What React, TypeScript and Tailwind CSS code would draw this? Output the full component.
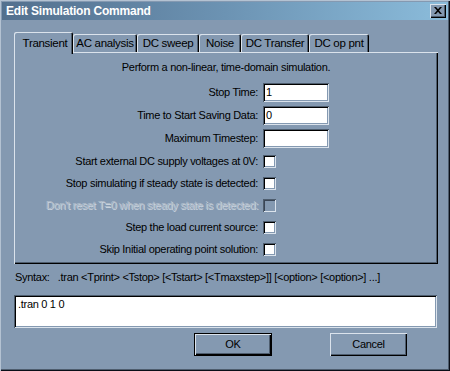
import React from "react";

const raised =
  "shadow-[inset_1px_1px_0_#dbe3ec,inset_-1px_-1px_0_#000,inset_-2px_-2px_0_#4e5d6e]";
const sunken =
  "shadow-[inset_1px_1px_0_#4e5d6e,inset_-1px_-1px_0_#dbe3ec,inset_2px_2px_0_#000,inset_-2px_-2px_0_#8499b1]";

function Tab({ label, w, active }: { label: string; w: string; active?: boolean }) {
  if (active) {
    return (
      <div
        className={`${w} h-[22px] -mb-[2px] relative z-10 bg-[#8499b1] flex items-start justify-center pt-[4px] pl-[3px] shadow-[inset_1px_1px_0_#dbe3ec,inset_-1px_0_0_#000,inset_-2px_0_0_#4e5d6e] rounded-tl-[2px] rounded-tr-[2px]`}
      >
        <span className="text-[11.5px] leading-[14px]">{label}</span>
      </div>
    );
  }
  return (
    <div
      className={`${w} h-[18px] bg-[#8499b1] flex items-start justify-center pt-[2px] shadow-[inset_1px_1px_0_#dbe3ec,inset_-1px_0_0_#000,inset_-2px_0_0_#4e5d6e] rounded-tl-[2px] rounded-tr-[2px]`}
    >
      <span className="text-[11.5px] leading-[14px]">{label}</span>
    </div>
  );
}

function InputRow({ label, value }: { label: string; value: string }) {
  return (
    <div className="grid grid-cols-[244px_auto] gap-x-[5px] h-[23px] items-center">
      <div className="text-right">{label}</div>
      <div className={`w-[66px] h-[19px] bg-white ${sunken} pl-[3px] pt-[3px] leading-[13px]`}>{value}</div>
    </div>
  );
}

function CheckRow({ label, disabled }: { label: string; disabled?: boolean }) {
  return (
    <div className="grid grid-cols-[244px_auto] gap-x-[5px] h-[22px] items-center">
      <div
        className={`text-right ${disabled ? "text-[#aebbc9] [text-shadow:1px_1px_0_#c9d3de]" : ""}`}
      >
        {label}
      </div>
      <div
        className={`w-[13px] h-[13px] ${
          disabled
            ? "bg-[#8499b1] shadow-[inset_1px_1px_0_#4e5d6e,inset_-1px_-1px_0_#dbe3ec,inset_2px_2px_0_#3a4656]"
            : `bg-white ${sunken}`
        }`}
      />
    </div>
  );
}

export default function App() {
  return (
    <div className="w-[450px] h-[371px] bg-[#8499b1] p-[2px] shadow-[inset_1px_1px_0_#b4c2d2,inset_-1px_-1px_0_#0a0f18,inset_-2px_-2px_0_#4e5d6e] flex flex-col font-['Liberation_Sans',Arial,sans-serif] text-[11px] tracking-[-0.3px] text-black overflow-hidden">
      {/* Title bar */}
      <div className="h-[18px] flex items-center justify-between pl-[4px] pr-[2px] bg-linear-to-r from-[#53708e] via-[#6c93b3] to-[#8bbcdb]">
        <span className="text-white font-bold text-[12px] tracking-[-0.2px] leading-[14px]">
          Edit Simulation Command
        </span>
        <div className={`w-[16px] h-[14px] bg-[#8499b1] ${raised} flex items-center justify-center`}>
          <svg width="8" height="7" viewBox="0 0 8 7" className="-mt-[1px] -ml-[1px]">
            <path d="M0 0h2l2 2.2L6 0h2L5 3.5 8 7H6L4 4.8 2 7H0l3-3.5z" fill="#000" />
          </svg>
        </div>
      </div>

      {/* Content */}
      <div className="flex flex-col pl-[12px] pt-[12px]">
        {/* Tabs */}
        <div className="flex items-end h-[20px]">
          <Tab label="Transient" w="w-[59px]" active />
          <Tab label="AC analysis" w="w-[64px]" />
          <Tab label="DC sweep" w="w-[62px]" />
          <Tab label="Noise" w="w-[42px]" />
          <Tab label="DC Transfer" w="w-[68px]" />
          <Tab label="DC op pnt" w="w-[60px]" />
        </div>

        {/* Panel */}
        <div className="w-[424px] shadow-[inset_1px_1px_0_#dbe3ec,inset_-1px_-1px_0_#000,inset_-2px_-2px_0_#4e5d6e] pt-[8px] pb-[4px]">
          <div className="text-center leading-[14px]">Perform a non-linear, time-domain simulation.</div>
          <div className="mt-[7px] flex flex-col">
            <InputRow label="Stop Time:" value="1" />
            <InputRow label="Time to Start Saving Data:" value="0" />
            <InputRow label="Maximum Timestep:" value="" />
            <CheckRow label="Start external DC supply voltages at 0V:" />
            <CheckRow label="Stop simulating if steady state is detected:" />
            <CheckRow label="Don't reset T=0 when steady state is detected:" disabled />
            <CheckRow label="Step the load current source:" />
            <CheckRow label="Skip Initial operating point solution:" />
          </div>
        </div>

        {/* Syntax */}
        <div className="mt-[6px] leading-[14px] pl-[1px] whitespace-pre">
          {"Syntax:   .tran <Tprint> <Tstop> [<Tstart> [<Tmaxstep>]] [<option> [<option>] ...]"}
        </div>

        {/* Command text area */}
        <div className={`mt-[11px] w-[423px] h-[33px] bg-white ${sunken} pl-[4px] pt-[3px] leading-[13px]`}>
          .tran 0 1 0
        </div>

        {/* Buttons */}
        <div className="mt-[5px] flex pl-[180px] gap-[58px]">
          <div className="w-[78px] h-[23px] border border-black">
            <div className={`w-full h-full flex items-center justify-center ${raised}`}>OK</div>
          </div>
          <div className={`w-[77px] h-[23px] flex items-center justify-center ${raised}`}>Cancel</div>
        </div>
      </div>
    </div>
  );
}
